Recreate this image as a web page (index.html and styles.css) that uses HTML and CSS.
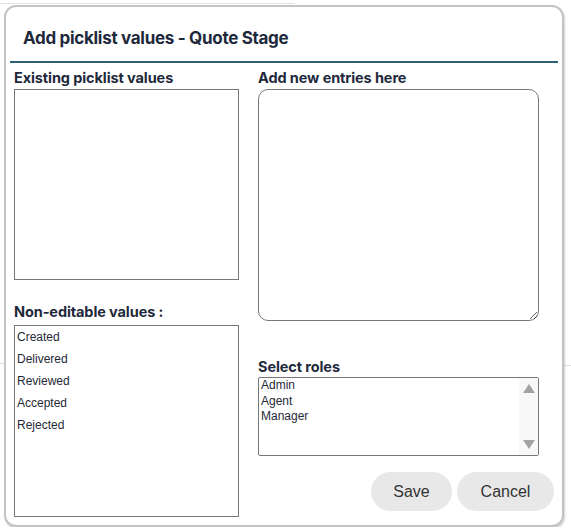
FILE: index.html
```html
<!DOCTYPE html>
<html lang="en">
<head>
    <meta charset="UTF-8">
    <meta name="viewport" content="width=device-width, initial-scale=1.0">
    <title>Add picklist values</title>
    <link rel="stylesheet" href="styles.css">
</head>
<body>

    <div class="backdrop-line top"></div>
    <div class="backdrop-line mid-left"></div>
    <div class="backdrop-line mid-right"></div>

    <div class="dialog">
        <div class="dialog-header">
            <h2>Add picklist values - Quote Stage</h2>
        </div>
        <hr class="divider">

        <div class="dialog-body">
            <div class="column">
                <label class="field-label">Existing picklist values</label>
                <div class="list-box existing"></div>

                <label class="field-label spaced">Non-editable values :</label>
                <ul class="list-box fixed-values">
                    <li>Created</li>
                    <li>Delivered</li>
                    <li>Reviewed</li>
                    <li>Accepted</li>
                    <li>Rejected</li>
                </ul>
            </div>

            <div class="column">
                <label class="field-label" for="newEntries">Add new entries here</label>
                <textarea id="newEntries" class="entries"></textarea>

                <label class="field-label roles-label">Select roles</label>
                <div class="roles-box">
                    <ul class="roles">
                        <li>Admin</li>
                        <li>Agent</li>
                        <li>Manager</li>
                    </ul>
                    <div class="fake-scroll">
                        <svg width="12" height="9" viewBox="0 0 12 9"><polygon points="6,0 12,9 0,9" fill="#a3a3a3"/></svg>
                        <svg width="12" height="9" viewBox="0 0 12 9"><polygon points="0,0 12,0 6,9" fill="#a3a3a3"/></svg>
                    </div>
                </div>

                <div class="actions">
                    <button type="button">Save</button>
                    <button type="button">Cancel</button>
                </div>
            </div>
        </div>
    </div>

</body>
</html>
```

FILE: styles.css
```css
* {
    box-sizing: border-box;
}
body {
    margin: 0;
    background: #fff;
    font-family: Inter, "Liberation Sans", Arial, sans-serif;
    color: #1e293b;
}
.backdrop-line {
    position: absolute;
    border-top: 1px solid #e2e2e2;
}
.backdrop-line.top {
    top: 3px;
    left: 0;
    width: 295px;
}
.backdrop-line.mid-left {
    top: 363px;
    left: 0;
    width: 5px;
}
.backdrop-line.mid-right {
    top: 365px;
    right: 0;
    width: 8px;
}
.dialog {
    position: relative;
    margin: 5px 0 0 4px;
    width: 560px;
    height: 522px;
    background: #fff;
    border: 2px solid #c4c4c4;
    border-radius: 12px;
    box-shadow: 1px 2px 2px rgba(0, 0, 0, 0.18);
}
.dialog-header {
    padding: 20px 0 0 17px;
    height: 54px;
}
.dialog-header h2 {
    margin: 0;
    font-size: 17px;
    font-weight: 700;
    line-height: 22px;
    letter-spacing: -0.3px;
    color: #1e293b;
}
.divider {
    margin: 0 4px;
    border: none;
    border-top: 2px solid #2f5f72;
}
.dialog-body {
    display: grid;
    grid-template-columns: 225px 281px;
    column-gap: 19px;
    padding: 6px 0 0 8px;
}
.column {
    display: flex;
    flex-direction: column;
}
.field-label {
    font-size: 14.5px;
    font-weight: 700;
    line-height: 18px;
    height: 20px;
    letter-spacing: -0.1px;
    color: #1e293b;
}
.field-label.spaced {
    margin-top: 23px;
    height: 22px;
}
.list-box {
    margin: 0;
    border: 1px solid #767676;
    background: #fff;
}
.existing {
    height: 191px;
}
.fixed-values {
    height: 192px;
    list-style: none;
    padding: 0 0 0 2px;
    font-family: "Liberation Sans", Arial, sans-serif;
    font-size: 12px;
    color: #1f2937;
}
.fixed-values li {
    line-height: 22px;
}
.entries {
    display: block;
    width: 281px;
    height: 232px;
    margin: 0;
    border: 1px solid #767676;
    border-radius: 10px;
    resize: vertical;
    font-family: "Liberation Sans", Arial, sans-serif;
}
.roles-label {
    margin-top: 37px;
    height: 19px;
}
.roles-box {
    display: flex;
    height: 79px;
    border: 1px solid #767676;
    border-radius: 2px;
}
.roles {
    flex: 1;
    margin: 0;
    padding: 0 0 0 2px;
    list-style: none;
    font-family: "Liberation Sans", Arial, sans-serif;
    font-size: 12px;
    line-height: 15.5px;
    color: #1f2937;
}
.fake-scroll {
    width: 19px;
    background: #f8f8f8;
    display: flex;
    flex-direction: column;
    justify-content: space-between;
    align-items: center;
    padding: 6px 0 6px;
}
.actions {
    display: flex;
    justify-content: flex-end;
    gap: 5px;
    margin: 16px -15px 0 0;
}
.actions button {
    height: 39px;
    border: none;
    border-radius: 20px;
    background: #e8e8e8;
    color: #333;
    font-family: "Liberation Sans", Arial, sans-serif;
    font-size: 16px;
    cursor: pointer;
}
.actions button:first-child {
    width: 81px;
}
.actions button:last-child {
    width: 97px;
}
```
